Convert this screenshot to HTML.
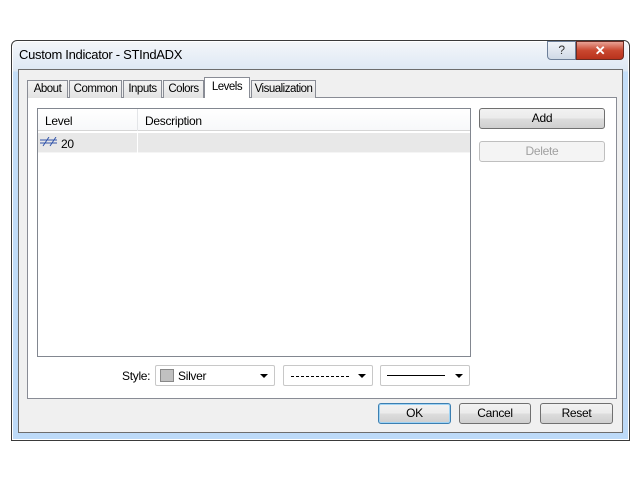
<!DOCTYPE html>
<html><head><style>
*{box-sizing:border-box;margin:0;padding:0}
body{width:640px;height:480px;background:#fff;font-family:"Liberation Sans",sans-serif;font-size:12px;color:#000;position:relative;overflow:hidden;letter-spacing:-0.3px}
.a{position:absolute}
.btn{position:absolute;border:1px solid #707070;border-radius:3px;background:linear-gradient(#f2f2f2,#ebebeb 50%,#dddddd 51%,#cfcfcf);text-align:center;line-height:18px;font-size:12px}
.cb{position:absolute;border:1px solid #c8c8c8;border-radius:2px;background:#fff;height:21px}
.arr{position:absolute;right:6px;top:8px;width:0;height:0;border-left:4px solid transparent;border-right:4px solid transparent;border-top:4px solid #000}
.tab{position:absolute;top:80px;height:18px;border:1px solid #898c95;border-bottom:none;background:linear-gradient(#f3f3f3,#e3e3e3);line-height:16px;text-align:center;font-size:11.5px;letter-spacing:-0.5px}
</style></head><body>
<div class="a" style="left:11px;top:40px;width:619px;height:401px;border:1px solid #3a3a3a;border-radius:6px 6px 0 0;background:linear-gradient(#f4f6f9,#dde8f4 30px,#c4def8 31px,#bddaf8);box-shadow:inset 0 0 0 1px #fff"></div>
<div class="a" style="left:19px;top:47px;font-size:13px;color:#000">Custom Indicator - STIndADX</div>
<div class="a" style="left:547px;top:41px;width:29px;height:19px;border:1px solid #6d7f99;border-radius:0 0 0 4px;background:linear-gradient(#f0f3f8,#cfd9e6);text-align:center;font-size:12px;line-height:17px;color:#333">?</div>
<div class="a" style="left:576px;top:41px;width:48px;height:19px;border:1px solid #6b2b22;border-radius:0 0 4px 0;background:linear-gradient(#e8a295,#c9472f 50%,#b8321c);text-align:center;color:#fff;font-weight:bold;font-size:13px;line-height:17px">✕</div>
<div class="a" style="left:18px;top:69px;width:605px;height:364px;border:1px solid #6d6d6d;background:#f0f0f0"></div>
<div class="a" style="left:27px;top:97px;width:590px;height:302px;border:1px solid #898c95;background:#fff"></div>
<div class="tab" style="left:27px;width:41px">About</div>
<div class="tab" style="left:69px;width:53px">Common</div>
<div class="tab" style="left:123px;width:39px">Inputs</div>
<div class="tab" style="left:163px;width:41px">Colors</div>
<div class="tab" style="left:204px;top:77px;height:21px;width:46px;background:#fff;line-height:18px">Levels</div>
<div class="tab" style="left:251px;width:65px">Visualization</div>
<div class="a" style="left:37px;top:108px;width:434px;height:249px;border:1px solid #828790;background:#fff"></div>
<div class="a" style="left:38px;top:109px;width:432px;height:22px;background:linear-gradient(#fff,#f7f8fa);border-bottom:1px solid #d5d5d5"></div>
<div class="a" style="left:137px;top:109px;width:1px;height:22px;background:#e3e5e8"></div>
<div class="a" style="left:45px;top:114px">Level</div>
<div class="a" style="left:145px;top:114px">Description</div>
<div class="a" style="left:38px;top:133px;width:432px;height:20px;background:#e8e8e8;border-bottom:1px solid #f5f5f5"></div>
<div class="a" style="left:137px;top:133px;width:1px;height:20px;background:#fff"></div>
<svg class="a" style="left:40px;top:137px" width="18" height="10"><path d="M0 3H17M0 6H17M3 9L9 0M10 9L16 0" stroke="#3355aa" stroke-width="1" fill="none"/></svg>
<div class="a" style="left:61px;top:137px">20</div>
<div class="btn" style="left:479px;top:108px;width:126px;height:21px">Add</div>
<div class="btn" style="left:479px;top:141px;width:126px;height:21px;border-color:#bfbfbf;background:#f4f4f4;color:#a0a0a0">Delete</div>
<div class="a" style="left:122px;top:369px">Style:</div>
<div class="cb" style="left:155px;top:365px;width:120px"><div class="a" style="left:4px;top:3px;width:14px;height:13px;background:#c0c0c0;border:1px solid #888"></div><div class="a" style="left:22px;top:3px">Silver</div><div class="arr"></div></div>
<div class="cb" style="left:283px;top:365px;width:90px"><div class="a" style="left:7px;top:10px;width:58px;border-top:1px dashed #000"></div><div class="arr"></div></div>
<div class="cb" style="left:380px;top:365px;width:90px"><div class="a" style="left:6px;top:9px;width:58px;border-top:1px solid #000"></div><div class="arr"></div></div>
<div class="btn" style="left:378px;top:403px;width:73px;height:21px;border-color:#3c7fb1;box-shadow:inset 0 0 0 1px #9fd3f4">OK</div>
<div class="btn" style="left:459px;top:403px;width:72px;height:21px">Cancel</div>
<div class="btn" style="left:540px;top:403px;width:73px;height:21px">Reset</div>
</body></html>
